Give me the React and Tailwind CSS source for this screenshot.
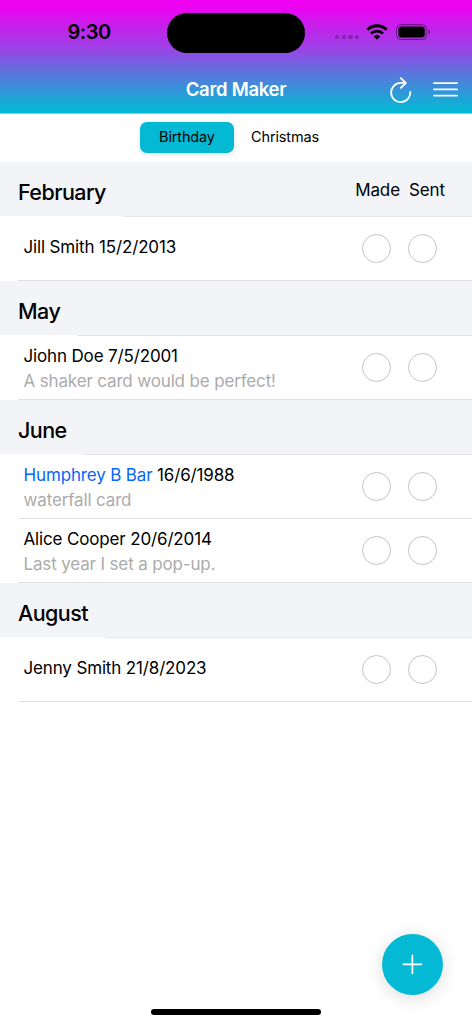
import { useState } from "react";
import clsx from "clsx";

const TABS = ["Birthday", "Christmas"];

const MONTHS = [
  {
    name: "February",
    lineInset: "ml-[123px]",
    cards: [{ id: 1, name: "Jill Smith", date: "15/2/2013" }],
  },
  {
    name: "May",
    lineInset: "ml-[77px]",
    cards: [{ id: 2, name: "Jiohn Doe", date: "7/5/2001", note: "A shaker card would be perfect!" }],
  },
  {
    name: "June",
    lineInset: "ml-[83px]",
    cards: [
      { id: 3, name: "Humphrey B Bar", date: "16/6/1988", note: "waterfall card", highlight: true },
      { id: 4, name: "Alice Cooper", date: "20/6/2014", note: "Last year I set a pop-up." },
    ],
  },
  {
    name: "August",
    lineInset: "ml-[105px]",
    cards: [{ id: 5, name: "Jenny Smith", date: "21/8/2023" }],
  },
];

function WifiIcon() {
  return (
    <svg width="22" height="16" viewBox="0 0 22 16" fill="none" stroke="black">
      <path d="M1.3 5.7a14 14 0 0 1 19.4 0" strokeWidth="2.9" />
      <path d="M5 9.5a8.7 8.7 0 0 1 12 0" strokeWidth="2.7" />
      <path d="M11 15.7 7.7 12.4a4.8 4.8 0 0 1 6.6 0Z" fill="black" stroke="none" />
    </svg>
  );
}

function BatteryIcon() {
  return (
    <svg width="35" height="16" viewBox="0 0 35 16" fill="none">
      <rect x="0.6" y="0.6" width="30" height="14.8" rx="4.8" stroke="black" strokeOpacity="0.4" strokeWidth="1.1" />
      <rect x="2.4" y="2.6" width="26.4" height="10.8" rx="3.2" fill="black" />
      <path d="M32.4 5.5c2.2.8 2.2 4.2 0 5Z" fill="black" fillOpacity="0.45" />
    </svg>
  );
}

function RefreshIcon() {
  return (
    <svg width="22" height="26" viewBox="0 0 22 26" fill="none" stroke="white" strokeWidth="1.8" strokeLinecap="round" strokeLinejoin="round">
      <path d="M20.3 14.8A9.6 9.6 0 1 1 10.7 5.9h4.6" />
      <path d="m10.8 1.2 5 4.8-5 4.8" />
    </svg>
  );
}

function MenuIcon() {
  return (
    <svg width="25" height="16" viewBox="0 0 25 16" stroke="white" strokeWidth="1.8" strokeLinecap="round">
      <path d="M1 1.2h23M1 7.4h23M1 13.6h23" />
    </svg>
  );
}

function StatusBar() {
  return (
    <div className="flex h-[66px] items-start">
      <div className="w-[167px] pt-[18px] pl-[67.5px] text-[20px] leading-[29px] font-semibold tracking-[-0.5px]">9:30</div>
      <div className="mt-[13px] h-10 w-[138px] rounded-full bg-black" />
      <div className="mt-6 ml-[30px] flex">
        <div className="mt-[11px] flex gap-[2.3px]">
          {[0, 1, 2, 3].map((dot) => (
            <span key={dot} className="size-[4.4px] rounded-full bg-black/25" />
          ))}
        </div>
        <div className="ml-[7px]">
          <WifiIcon />
        </div>
        <div className="ml-2">
          <BatteryIcon />
        </div>
      </div>
    </div>
  );
}

function NavBar() {
  return (
    <div className="grid h-[47px] grid-cols-[1fr_auto_1fr]">
      <span />
      <h1 className="pt-[11px] text-[18.5px] leading-6 font-semibold tracking-[-0.3px] text-white">Card Maker</h1>
      <div className="flex justify-end pr-[14px]">
        <button type="button" aria-label="Refresh" className="mt-[11px] h-[26px]">
          <RefreshIcon />
        </button>
        <button type="button" aria-label="Menu" className="mt-4 ml-[21px] h-4">
          <MenuIcon />
        </button>
      </div>
    </div>
  );
}

function CheckCircle({ label, checked, onToggle }) {
  return (
    <button
      type="button"
      aria-label={label}
      aria-pressed={checked}
      onClick={onToggle}
      className={clsx("size-[29px] rounded-full border", checked ? "border-[#04b9d4] bg-[#04b9d4]" : "border-[#c4c4c4]")}
    />
  );
}

function CardRow({ card, status, onToggle }) {
  return (
    <li className="flex h-16 flex-col bg-white">
      <div className="flex flex-1 items-center pr-[35px] pl-[23.5px]">
        <div className={clsx("flex-1 text-[17px] leading-[25px]", card.note ? "pt-[2px]" : "-mt-[2px]")}>
          <p className="tracking-[-0.15px]">
            <span className={clsx(card.highlight && "text-[#0a66f5]")}>{card.name}</span>{" "}
            <span>{card.date}</span>
          </p>
          {card.note ? <p className="tracking-[-0.15px] text-[#ababab]">{card.note}</p> : null}
        </div>
        <div className="flex gap-[17px]">
          <CheckCircle label="Made" checked={Boolean(status.made)} onToggle={() => onToggle(card.id, "made")} />
          <CheckCircle label="Sent" checked={Boolean(status.sent)} onToggle={() => onToggle(card.id, "sent")} />
        </div>
      </div>
      <div className="ml-[18px] h-px bg-[#e0e0e2]" />
    </li>
  );
}

export default function App() {
  const [activeTab, setActiveTab] = useState("Birthday");
  const [statuses, setStatuses] = useState({});

  const handleToggle = (id, key) => {
    setStatuses((current) => ({
      ...current,
      [id]: { ...current[id], [key]: !current[id]?.[key] },
    }));
  };

  return (
    <main className="relative h-[1024px] w-[472px] overflow-hidden bg-white font-['Inter',sans-serif] text-black">
      <header className="h-[114px] border-b border-[#b9b3ec] bg-[linear-gradient(180deg,#f000f2_0%,#ea04f0_7%,#9b42e6_43%,#5878dc_66%,#2b9bd8_83%,#06b8d4_98%)]">
        <StatusBar />
        <NavBar />
      </header>

      <nav className="flex h-12 items-start pt-2 pl-[140px]">
        {TABS.map((tab) => (
          <button
            key={tab}
            type="button"
            onClick={() => setActiveTab(tab)}
            className={clsx(
              "h-[31px] w-[94px] rounded-[7px] pb-[2px] text-[14.5px] tracking-[-0.15px]",
              tab !== "Birthday" && "ml-1",
              activeTab === tab && "bg-[#04b9d4] shadow-[0_1px_5px_rgba(0,0,0,0.14)]"
            )}
          >
            {tab}
          </button>
        ))}
      </nav>

      {MONTHS.map((month, index) => (
        <section key={month.name}>
          <div className="flex h-[55px] flex-col bg-[#f3f4f8]">
            <div className="flex flex-1 justify-between pr-[27px] pl-[18px]">
              <h2 className="pt-4 text-[21.5px] leading-7 font-[450] tracking-[-0.55px]">{month.name}</h2>
              {index === 0 ? (
                <div className="flex gap-[9px] pt-4 text-[17px] leading-6 tracking-[-0.1px]">
                  <span>Made</span>
                  <span>Sent</span>
                </div>
              ) : null}
            </div>
            <div className="flex bg-white">
              <div className={clsx("h-px flex-1 bg-[#e6e6e9]", month.lineInset)} />
            </div>
          </div>
          <ul>
            {month.cards.map((card) => (
              <CardRow key={card.id} card={card} status={statuses[card.id] || {}} onToggle={handleToggle} />
            ))}
          </ul>
        </section>
      ))}

      <button
        type="button"
        aria-label="Add card"
        className="absolute right-[29px] bottom-[29px] flex size-[61px] items-center justify-center rounded-full bg-[#04b9d4] shadow-[0_3px_18px_rgba(0,0,0,0.14)]"
      >
        <svg width="21" height="21" viewBox="0 0 21 21" stroke="white" strokeWidth="1.7" strokeLinecap="round">
          <path d="M10.4 1.3v18M1.4 10.3h18" />
        </svg>
      </button>
      <div className="absolute bottom-[9px] left-[151px] h-[6px] w-[170px] rounded-full bg-black" />
    </main>
  );
}
